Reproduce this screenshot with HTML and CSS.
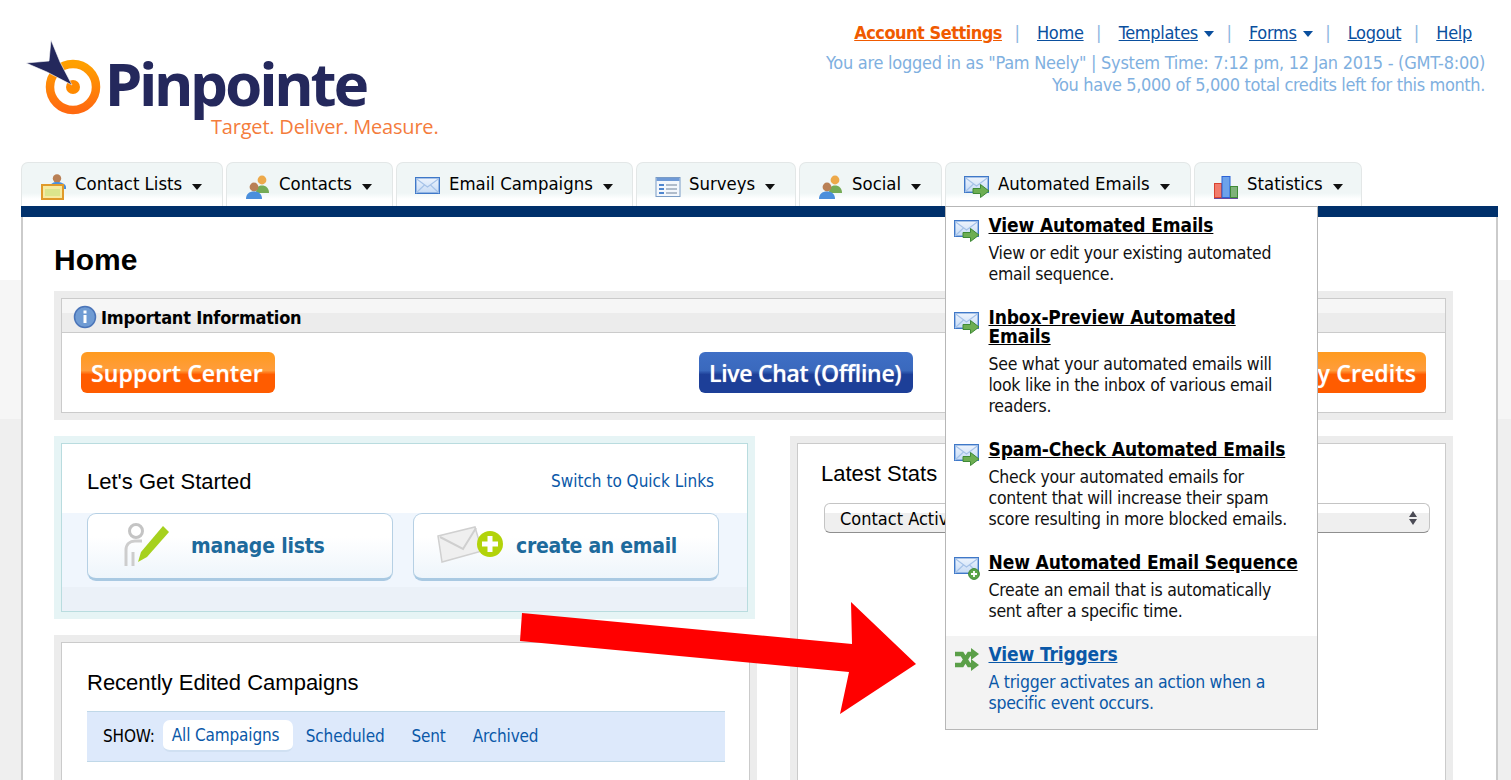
FILE: index.html
```html
<!DOCTYPE html>
<html lang="en">
<head>
<meta charset="utf-8">
<title>Pinpointe - Home</title>
<link rel="stylesheet" href="styles.css">
</head>
<body>
<svg class="defs" width="0" height="0" aria-hidden="true">
  <defs>
    <linearGradient id="ringGrad" x1="0" y1="0" x2="0" y2="1"><stop offset="0" stop-color="#ffa000"/><stop offset="1" stop-color="#ff6a10"/></linearGradient>
    <linearGradient id="mailGrad" x1="0" y1="0" x2="0" y2="1"><stop offset="0" stop-color="#eef4fd"/><stop offset="1" stop-color="#c6dbf5"/></linearGradient>
    <symbol id="mail" viewBox="0 0 26 22">
      <rect x="0.7" y="1.7" width="23.6" height="15.6" fill="url(#mailGrad)" stroke="#3f78c8" stroke-width="1.4"/>
      <path d="M1 2.500 12.500 11 24 2.500M1 17 9.500 9M24 17 15.500 9" fill="none" stroke="#a5c2e8" stroke-width="1.100"/>
    </symbol>
    <symbol id="mailgo" viewBox="0 0 26 24">
      <use href="#mail" width="26" height="22"/>
      <path d="M9 13.500h7.500V9.500l8.500 6.500-8.500 6.500v-4H9z" fill="#6dae52" stroke="#3f8a36" stroke-width="1"/>
    </symbol>
    <symbol id="mailadd" viewBox="0 0 26 24">
      <use href="#mail" width="26" height="22"/>
      <circle cx="20" cy="18" r="5.400" fill="#5ba548" stroke="#3f8a36"/>
      <path d="M20 15v6M17 18h6" stroke="#fff" stroke-width="1.800"/>
    </symbol>
    <symbol id="people" viewBox="0 0 26 26">
      <circle cx="17" cy="6" r="4.400" fill="#eda94a"/>
      <path d="M11 19c0-5 2-7.500 6-7.500s7 2.500 7 7.500z" fill="#75ab55"/>
      <circle cx="9" cy="13" r="4.400" fill="#b98055"/>
      <path d="M1 25c0-5 3-7.500 8-7.500s8 2.500 8 7.500z" fill="#4b8fdc"/>
    </symbol>
    <symbol id="lists" viewBox="0 0 26 26">
      <circle cx="16" cy="4.500" r="4.200" fill="#b98055"/>
      <path d="M9 13c0-3 3-5 7-5s9 2 9 5v2H9z" fill="#4b8fdc"/>
      <rect x="1" y="11" width="21" height="14" fill="#f6eaa0" stroke="#e09a2a" stroke-width="2"/>
      <path d="M4 15h15v7H4z" fill="#dbe58c"/>
    </symbol>
    <symbol id="survey" viewBox="0 0 26 22">
      <rect x="1" y="1.500" width="24" height="19" fill="#f3f7fc" stroke="#7a9cc6"/>
      <rect x="1.500" y="2" width="23" height="3" fill="#6f9ad6"/>
      <path d="M4 9h5M4 13h5M4 17h5" stroke="#4f86cf" stroke-width="2"/>
      <path d="M11 9h11M11 13h11M11 17h11" stroke="#9aa9bb" stroke-width="1.400"/>
    </symbol>
    <symbol id="bars" viewBox="0 0 26 24">
      <rect x="1.500" y="8.500" width="7" height="14" fill="#f27b6b" stroke="#d9432f"/>
      <rect x="9" y="1.500" width="8" height="21" fill="#6da2ea" stroke="#2b62d6"/>
      <rect x="17.500" y="11.500" width="7" height="11" fill="#7fb279" stroke="#3f8a36"/>
      <path d="M1 23.500h24" stroke="#6a4aa0"/>
    </symbol>
    <symbol id="shuffle" viewBox="0 0 26 24">
      <path d="M1 6h7l7 11h3M1 17h7l7-11h3" fill="none" stroke="#5a9f48" stroke-width="4.500"/>
      <path d="M17 0l8 6-8 6zM17 11l8 6-8 6z" fill="#5a9f48"/>
    </symbol>
  </defs>
</svg>

<div class="page">
  <header class="header">
    <div class="logo">
      <svg class="logo-mark" viewBox="0 0 80 76" width="80" height="76" aria-hidden="true">
        <circle cx="47" cy="47" r="23" fill="none" stroke="url(#ringGrad)" stroke-width="8.500"/>
        <circle cx="47" cy="47" r="7" fill="#ff8a00"/>
        <path d="M25 0 34 22 46 45 21 32 0 23 23 21z" fill="#24285c" stroke="#fff" stroke-width="0.600"/>
      </svg>
      <div class="logo-words">
        <div class="logo-name">Pinpointe</div>
        <div class="logo-tag">Target. Deliver. Measure.</div>
      </div>
    </div>
    <div class="account">
      <nav class="account-nav">
        <a class="link-accent" href="#">Account Settings</a><span class="sep">|</span>
        <a href="#">Home</a><span class="sep">|</span>
        <a href="#">Templates</a><i class="caret caret-blue"></i><span class="sep">|</span>
        <a href="#">Forms</a><i class="caret caret-blue"></i><span class="sep">|</span>
        <a href="#">Logout</a><span class="sep">|</span>
        <a href="#">Help</a>
      </nav>
      <p class="status">You are logged in as "Pam Neely" | System Time: 7:12 pm, 12 Jan 2015 - (GMT-8:00)<br><span class="status-credits">You have 5,000 of 5,000 total credits left for this month.</span></p>
    </div>
  </header>

  <ul class="tabs">
    <li class="tab tab-first"><svg class="tab-icon"><use href="#lists"/></svg>Contact Lists<i class="caret"></i></li>
    <li class="tab"><svg class="tab-icon"><use href="#people"/></svg>Contacts<i class="caret"></i></li>
    <li class="tab"><svg class="tab-icon"><use href="#mail"/></svg>Email Campaigns<i class="caret"></i></li>
    <li class="tab"><svg class="tab-icon"><use href="#survey"/></svg>Surveys<i class="caret"></i></li>
    <li class="tab"><svg class="tab-icon"><use href="#people"/></svg>Social<i class="caret"></i></li>
    <li class="tab"><svg class="tab-icon"><use href="#mailgo"/></svg>Automated Emails<i class="caret"></i>
      <div class="menu">
        <div class="menu-item">
          <svg class="menu-icon"><use href="#mailgo"/></svg>
          <div><a class="menu-title" href="#">View Automated Emails</a>
          <p class="menu-desc">View or edit your existing automated<br>email sequence.</p></div>
        </div>
        <div class="menu-item">
          <svg class="menu-icon"><use href="#mailgo"/></svg>
          <div><a class="menu-title" href="#">Inbox-Preview Automated<br>Emails</a>
          <p class="menu-desc">See what your automated emails will<br>look like in the inbox of various email<br>readers.</p></div>
        </div>
        <div class="menu-item">
          <svg class="menu-icon"><use href="#mailgo"/></svg>
          <div><a class="menu-title" href="#">Spam-Check Automated Emails</a>
          <p class="menu-desc">Check your automated emails for<br>content that will increase their spam<br>score resulting in more blocked emails.</p></div>
        </div>
        <div class="menu-item">
          <svg class="menu-icon"><use href="#mailadd"/></svg>
          <div><a class="menu-title" href="#">New Automated Email Sequence</a>
          <p class="menu-desc">Create an email that is automatically<br>sent after a specific time.</p></div>
        </div>
        <div class="menu-item menu-item-active">
          <svg class="menu-icon"><use href="#shuffle"/></svg>
          <div><a class="menu-title" href="#">View Triggers</a>
          <p class="menu-desc">A trigger activates an action when a<br>specific event occurs.</p></div>
        </div>
      </div>
    </li>
    <li class="tab"><svg class="tab-icon"><use href="#bars"/></svg>Statistics<i class="caret"></i></li>
  </ul>
  <div class="nav-bar"></div>

  <main class="content">
    <h1 class="page-title">Home</h1>

    <section class="panel panel-info">
      <div class="panel-inner">
        <h2 class="info-head">
          <svg class="info-icon" viewBox="0 0 24 24" aria-hidden="true">
            <circle cx="12" cy="12" r="10.500" fill="#6f9bd3" stroke="#4a74b8" stroke-width="1.500"/>
            <rect x="10.500" y="5.500" width="3" height="3" fill="#fff"/>
            <rect x="10.500" y="10" width="3" height="8" fill="#fff"/>
          </svg>Important Information</h2>
        <div class="info-actions">
          <a class="btn btn-orange" href="#">Support Center</a>
          <a class="btn btn-blue" href="#">Live Chat (Offline)</a>
          <a class="btn btn-orange btn-end" href="#">Buy Credits</a>
        </div>
      </div>
    </section>

    <div class="columns">
      <div class="col-left">
        <section class="panel panel-teal">
          <div class="panel-inner started">
            <div class="head-row">
              <h3 class="box-title">Let's Get Started</h3>
              <a class="plain-link" href="#">Switch to Quick Links</a>
            </div>
            <div class="big-buttons">
              <a class="big-btn" href="#">
                <svg class="big-icon" viewBox="0 0 50 48" width="50" height="48" aria-hidden="true">
                  <circle cx="12" cy="9" r="6.500" fill="none" stroke="#c4c4c4" stroke-width="3"/>
                  <path d="M2 44V28c0-6 4-9 9-9h7M9 44V30" fill="none" stroke="#cdcdcd" stroke-width="3"/>
                  <path d="M39 4l6 6-22 25-9 5 3-10z" fill="#a6d11e"/>
                </svg>
                <span class="big-label">manage lists</span>
              </a>
              <a class="big-btn big-btn-mail" href="#">
                <svg class="big-icon" viewBox="0 0 66 48" width="66" height="48" aria-hidden="true">
                  <path d="M1 14 38 5l7 24-40 11z" fill="#efefef" stroke="#d0d0d0" stroke-width="1.500"/>
                  <path d="M3 15 26 27l13-21" fill="none" stroke="#cfcfcf" stroke-width="2"/>
                  <circle cx="53" cy="22" r="13" fill="#b2d30a"/>
                  <path d="M53 14v16M45 22h16" stroke="#fff" stroke-width="5"/>
                </svg>
                <span class="big-label">create an email</span>
              </a>
            </div>
          </div>
        </section>

        <section class="panel panel-recent">
          <div class="panel-inner recent">
            <h3 class="box-title">Recently Edited Campaigns</h3>
            <div class="filter">
              <span class="filter-label">SHOW:</span>
              <a class="pill" href="#">All Campaigns</a>
              <a class="filter-link" href="#">Scheduled</a>
              <a class="filter-link" href="#">Sent</a>
              <a class="filter-link" href="#">Archived</a>
            </div>
          </div>
        </section>
      </div>

      <section class="panel panel-stats">
        <div class="panel-inner stats">
          <h3 class="box-title">Latest Stats</h3>
          <div class="select">
            <span>Contact Activity</span>
            <svg viewBox="0 0 10 16" width="10" height="16" aria-hidden="true"><path d="M5 1l4 6H1zM5 15 1 9h8z" fill="#4b4b55"/></svg>
          </div>
        </div>
      </section>
    </div>
  </main>
</div>

<svg class="arrow" viewBox="0 0 1511 780" width="1511" height="780" aria-hidden="true">
  <path d="M522 613 852 644 851 602 916 664 840 714 849 672 520 641z" fill="#ff0000"/>
</svg>
</body>
</html>
```

FILE: styles.css
```css
* { box-sizing: border-box; }

html, body {
  margin: 0;
  height: 780px;
  overflow: hidden;
}

body {
  position: relative;
  font-family: "DejaVu Sans", Verdana, sans-serif;
  font-stretch: condensed;
  font-size: 18px;
  color: #000;
  background: linear-gradient(#fff 0 280px, #f6f6f6 280px 419px, #efefef 419px);
}

a { color: #0a58a8; text-decoration: none; }

.defs { position: absolute; }

.page { padding: 0 13px 0 21px; }

/* header */
.header {
  display: flex;
  justify-content: space-between;
  height: 162px;
}

.logo {
  display: flex;
  padding: 40px 0 0 5px;
}

.logo-mark { flex: none; }

.logo-name {
  font-family: "Noto Sans", sans-serif;
  font-stretch: normal;
  font-weight: 700;
  font-size: 60px;
  line-height: 60px;
  color: #24285c;
  margin: 13px 0 0 -1px;
  letter-spacing: -3px;
}

.logo-tag {
  font-family: "Open Sans", sans-serif;
  font-stretch: normal;
  font-size: 20px;
  font-weight: 500;
  line-height: 24px;
  color: #f47c3c;
  margin: 2px 0 0 105px;
  white-space: nowrap;
  letter-spacing: -0.2px;
}

.account {
  padding: 22px 13px 0 0;
  text-align: right;
  white-space: nowrap;
}

.account-nav {
  padding-right: 13px;
  line-height: 22px;
  letter-spacing: -0.3px;
}

.account-nav a { color: #0a4f9e; text-decoration: underline; }

.account-nav a.link-accent {
  color: #f05a00;
  font-weight: 700;
  letter-spacing: -0.5px;
}

.sep {
  color: #8db6e0;
  margin: 0 12.500px;
}

.status {
  margin: 8px 0 0;
  line-height: 22px;
  color: #7fb0e0;
  letter-spacing: -0.27px;
}

.status-credits { letter-spacing: -0.37px; }

.caret {
  display: inline-block;
  flex: none;
  width: 0;
  height: 0;
  margin: 7px 0 0 10px;
  border-style: solid;
  border-width: 6px 5.500px 0;
  border-color: #111 transparent transparent;
}

.caret-blue {
  margin: 0 0 0 6px;
  border-top-color: #0a4f9e;
  vertical-align: 2px;
}

/* tabs */
.tabs {
  display: grid;
  grid-template-columns: 205px 170px 240px 163px 146px 249px 171px;
  margin: 0;
  padding: 0;
  list-style: none;
  height: 44px;
}

.tab {
  position: relative;
  display: flex;
  align-items: center;
  margin-right: 3px;
  padding: 0 0 2px 18px;
  height: 44px;
  border: 1px solid #e3e7e7;
  border-bottom: 0;
  border-radius: 7px 7px 0 0;
  background: linear-gradient(#f0f6f6 0 30px, #fff 36px);
  font-size: 18.400px;
  white-space: nowrap;
  line-height: 41px;
}

.tab-first { padding-left: 19px; }

.tab-icon {
  flex: none;
  width: 26px;
  height: 26px;
  margin: 6px 8px 0 0;
}

.nav-bar {
  height: 11px;
  background: #00306b;
}

/* dropdown menu */
.menu {
  position: absolute;
  z-index: 3;
  top: 43px;
  left: -1px;
  width: 373px;
  height: 524px;
  border: 1px solid #b7b7b7;
  background: #fff;
  font-size: 18px;
  white-space: normal;
  line-height: 21px;
}

.menu-item {
  display: flex;
  padding: 8px 8px 15px 8px;
}

.menu-item:first-child { padding-top: 9px; }
.menu-item:nth-child(4) { padding-bottom: 14px; }

.menu-icon {
  flex: none;
  width: 26px;
  height: 24px;
  margin: 3px 8.500px 0 0;
}

.menu-title {
  display: block;
  font-weight: 700;
  font-size: 19px;
  line-height: 19px;
  letter-spacing: -0.13px;
  color: #000;
  text-decoration: underline;
}

.menu-desc {
  margin: 8px 0 0;
  font-size: 17.500px;
  letter-spacing: -0.26px;
  color: #111;
}

.menu-item-active {
  height: 93px;
  padding-top: 9px;
  background: #f3f3f3;
}

.menu-item-active .menu-title,
.menu-item-active .menu-desc { color: #0a58a8; }

/* content */
.content {
  height: 563px;
  overflow: hidden;
  padding: 0 43px 0 31px;
  border-left: 2px solid #cbcbcb;
  border-right: 2px solid #cbcbcb;
  background: #fff;
}

.page-title {
  margin: 0;
  height: 74px;
  padding-top: 25px;
  font-family: "Liberation Sans", Arial, sans-serif;
  font-stretch: normal;
  font-size: 30px;
  line-height: 35px;
  font-weight: 700;
}

.panel {
  padding: 7px;
  background: #ececec;
}

.panel-inner {
  height: 100%;
  border: 1px solid #cbcbcb;
  background: #fff;
}

.info-head {
  display: flex;
  align-items: center;
  margin: 0;
  height: 34px;
  padding: 3px 0 0 11px;
  border-bottom: 1px solid #cbcbcb;
  background: linear-gradient(#f6f6f6 0 14px, #ececec 14px);
  font-size: 18px;
  font-weight: 700;
  letter-spacing: -0.2px;
}

.info-icon {
  width: 24px;
  height: 24px;
  margin-right: 4px;
}

.info-actions {
  display: flex;
  height: 79px;
  padding: 19px 19px 0;
}

.btn {
  display: block;
  height: 41px;
  padding: 0 10px;
  border-radius: 6px;
  font-family: "Open Sans", sans-serif;
  font-stretch: normal;
  font-size: 23px;
  font-weight: 600;
  line-height: 43px;
  color: #fff;
  white-space: nowrap;
  text-shadow: 0 0 1px rgba(255, 255, 255, 0.6);
}

.btn-orange {
  width: 194px;
  letter-spacing: 0.15px;
  background: linear-gradient(#ff9a1e 0, #ff9d3c 45%, #ff5c00 55%, #ff5c00 100%);
}

.btn-blue {
  width: 214px;
  margin-left: 424px;
  letter-spacing: -0.3px;
  background: linear-gradient(#3f6fc6 0, #3a69bd 45%, #1d3f98 55%, #1d3f98 100%);
}

.btn-end { margin-left: auto; width: 170px; text-align: right; }

.columns {
  display: grid;
  grid-template-columns: 703px 663px;
  column-gap: 33px;
  margin-top: 16px;
}

.col-left {
  display: flex;
  flex-direction: column;
  gap: 16px;
}

.panel-teal {
  width: 701px;
  height: 183px;
  background: #e6f4f5;
}

.panel-teal .panel-inner { border-color: #b9dcdf; }

.started {
  padding: 0 25px;
  background: linear-gradient(#fff 0 69px, #f0f6fd 69px 143px, #ebf1f8 143px);
}

.head-row {
  display: flex;
  justify-content: space-between;
  align-items: center;
  height: 69px;
  padding: 7px 8px 0 0;
}

.box-title {
  margin: 0;
  font-family: "Liberation Sans", Arial, sans-serif;
  font-stretch: normal;
  font-size: 22px;
  font-weight: 400;
  line-height: 28px;
}

.plain-link {
  font-size: 17px;
  margin-top: -2px;
}

.big-buttons {
  display: flex;
  gap: 20px;
}

.big-btn {
  display: flex;
  align-items: center;
  width: 306px;
  height: 68px;
  padding-left: 36px;
  border: 1px solid #b6d0e4;
  border-bottom: 3px solid #a9c9e2;
  border-radius: 9px;
  background: linear-gradient(#fff 35%, #eef5fb);
}

.big-btn-mail { padding-left: 23px; }

.big-icon { flex: none; }

.big-label {
  margin-left: 17px;
  font-size: 21px;
  font-weight: 700;
  letter-spacing: -0.2px;
  color: #1d6a9c;
  white-space: nowrap;
}

.big-btn-mail .big-label {
  margin-left: 13px;
  letter-spacing: -0.3px;
}

.panel-recent { height: 300px; }

.recent { padding: 26px 24px 0 25px; }

.filter {
  display: flex;
  align-items: center;
  height: 51px;
  margin-top: 14px;
  padding: 0 0 2px 16px;
  border-top: 1px solid #c0d8e8;
  border-bottom: 1px solid #c0d8e8;
  background: #dde9fb;
  font-size: 17px;
  letter-spacing: -0.15px;
}

.filter-label { margin-right: 8px; }

.pill {
  width: 130px;
  padding: 0 9px;
  height: 32px;
  line-height: 30px;
  border-radius: 7px;
  border-bottom: 2px solid #d0e0f2;
  background: #fff;
}

.filter-link { margin-left: 13px; margin-right: 14px; }

.panel-stats { height: 400px; }

.stats { padding: 16px 15px 0 23px; }

.select {
  display: flex;
  justify-content: space-between;
  align-items: center;
  height: 30px;
  margin: 15px 0 0 3px;
  padding: 0 11px 0 15px;
  border: 1px solid #c4c4c4;
  border-bottom-color: #8f8f8f;
  border-radius: 6px;
  background: linear-gradient(#fff 0 9px, #efefef 9px);
}

.arrow {
  position: absolute;
  top: 0;
  left: 0;
  z-index: 5;
  pointer-events: none;
}
```
